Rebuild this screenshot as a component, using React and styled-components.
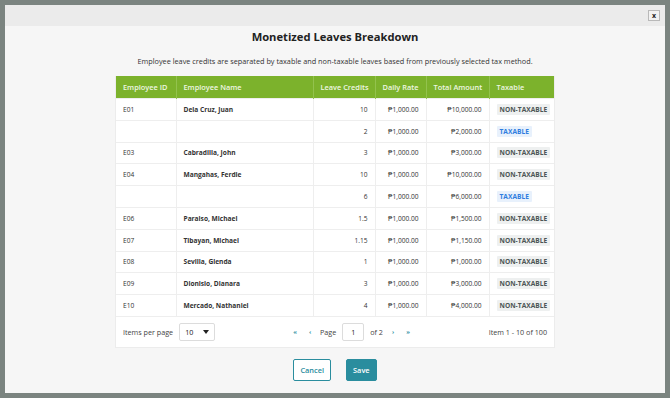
import React from 'react';
import styled, { createGlobalStyle } from 'styled-components';

const GlobalStyle = createGlobalStyle`
  html, body {
    margin: 0;
    padding: 0;
    background: #7b8480;
    font-family: 'Open Sans', 'Liberation Sans', sans-serif;
  }
`;

const teal = '#2a8d9e';

const Backdrop = styled.div`
  width: 670px;
  height: 398px;
  padding: 5px;
  box-sizing: border-box;
`;

const Modal = styled.div`
  width: 660px;
  height: 388px;
  background: #f6f6f6;
  display: flex;
  flex-direction: column;
`;

const TitleBar = styled.div`
  height: 21px;
  background: #ebebeb;
  display: flex;
  justify-content: flex-end;
  align-items: center;
  padding-right: 5px;
`;

const CloseButton = styled.button`
  width: 12px;
  height: 11px;
  padding: 0;
  border: 1px solid #b9b9b9;
  background: #f2f2f2;
  font-size: 7px;
  font-weight: 700;
  line-height: 8px;
  color: #222;
  font-family: inherit;
`;

const Content = styled.div`
  display: flex;
  flex-direction: column;
  align-items: center;
  padding-top: 2px;
`;

const Title = styled.h2`
  margin: 0;
  font-size: 11.2px;
  font-weight: 700;
  color: #222;
  line-height: 18px;
`;

const Subtitle = styled.p`
  margin: 9px 0 9px;
  font-size: 7.3px;
  color: #333;
  line-height: 12px;
`;

const TableCard = styled.div`
  width: 438px;
  background: #fff;
  border: 1px solid #ececec;
  border-top: none;
`;

const Table = styled.table`
  width: 100%;
  border-collapse: collapse;
  table-layout: fixed;
`;

const Th = styled.th`
  background: #7cb22c;
  color: #eef7e2;
  font-size: 7.4px;
  font-weight: 600;
  height: 22px;
  padding: 0 7px;
  white-space: nowrap;
  text-align: ${({ $align }) => $align || 'left'};
  border-left: 1px solid #93c24e;
  &:first-child {
    border-left: none;
  }
`;

const Td = styled.td`
  height: 20.8px;
  padding: 0 7px;
  font-size: 6.6px;
  color: #333;
  white-space: nowrap;
  font-weight: ${({ $bold }) => ($bold ? 700 : 400)};
  text-align: ${({ $align }) => $align || 'left'};
  border-left: 1px solid #eeeeee;
  border-top: 1px solid #eeeeee;
  &:first-child {
    border-left: none;
  }
`;

const Badge = styled.span`
  display: inline-block;
  padding: 1px 3px;
  font-size: 6.6px;
  font-weight: 700;
  letter-spacing: 0.05px;
  border-radius: 1px;
  color: ${({ $taxable }) => ($taxable ? '#2f7de0' : '#4c5555')};
  background: ${({ $taxable }) => ($taxable ? '#e8f1fc' : '#eef0f0')};
`;

const Pager = styled.div`
  height: 30px;
  border-top: 1px solid #eeeeee;
  display: grid;
  grid-template-columns: 167px auto 1fr;
  align-items: center;
  padding: 0 7px;
  font-size: 7.2px;
  color: #444;
`;

const PerPage = styled.div`
  display: flex;
  align-items: center;
  gap: 6px;
`;

const Select = styled.div`
  width: 36px;
  height: 18px;
  box-sizing: border-box;
  border: 1px solid #dcdcdc;
  border-radius: 2px;
  display: flex;
  align-items: center;
  justify-content: space-between;
  padding: 0 5px;
  color: #222;
`;

const Nav = styled.div`
  display: flex;
  align-items: center;
  gap: 5px;
`;

const NavIcon = styled.span`
  color: ${teal};
  font-size: 6px;
  font-weight: 700;
  width: 10px;
  text-align: center;
`;

const PageInput = styled.div`
  width: 22px;
  height: 18px;
  box-sizing: border-box;
  border: 1px solid #dcdcdc;
  border-radius: 2px;
  display: flex;
  align-items: center;
  justify-content: center;
  color: #222;
  margin: 0 1px;
`;

const ItemCount = styled.div`
  justify-self: end;
`;

const Actions = styled.div`
  display: flex;
  gap: 15px;
  margin-top: 11px;
`;

const Button = styled.button`
  height: 22px;
  padding: 0 6px;
  font-family: inherit;
  font-size: 7.4px;
  font-weight: 600;
  border-radius: 2px;
  border: 1px solid ${teal};
  color: ${({ $primary }) => ($primary ? '#fff' : teal)};
  background: ${({ $primary }) => ($primary ? teal : '#fff')};
`;

const rows = [
  { id: 'E01', name: 'Dela Cruz, Juan', credits: '10', total: '₱10,000.00', taxable: false },
  { id: '', name: '', credits: '2', total: '₱2,000.00', taxable: true },
  { id: 'E03', name: 'Cabradilla, John', credits: '3', total: '₱3,000.00', taxable: false },
  { id: 'E04', name: 'Mangahas, Ferdie', credits: '10', total: '₱10,000.00', taxable: false },
  { id: '', name: '', credits: '6', total: '₱6,000.00', taxable: true },
  { id: 'E06', name: 'Paraiso, Michael', credits: '1.5', total: '₱1,500.00', taxable: false },
  { id: 'E07', name: 'Tibayan, Michael', credits: '1.15', total: '₱1,150.00', taxable: false },
  { id: 'E08', name: 'Sevilla, Glenda', credits: '1', total: '₱1,000.00', taxable: false },
  { id: 'E09', name: 'Dionisio, Dianara', credits: '3', total: '₱3,000.00', taxable: false },
  { id: 'E10', name: 'Mercado, Nathaniel', credits: '4', total: '₱4,000.00', taxable: false },
];

export default function App() {
  return (
    <>
      <GlobalStyle />
      <Backdrop>
        <Modal>
          <TitleBar>
            <CloseButton>x</CloseButton>
          </TitleBar>
          <Content>
            <Title>Monetized Leaves Breakdown</Title>
            <Subtitle>
              Employee leave credits are separated by taxable and non-taxable leaves based from previously selected tax method.
            </Subtitle>
            <TableCard>
              <Table>
                <colgroup>
                  <col style={{ width: 60 }} />
                  <col style={{ width: 137 }} />
                  <col style={{ width: 62 }} />
                  <col style={{ width: 51 }} />
                  <col style={{ width: 63 }} />
                  <col style={{ width: 65 }} />
                </colgroup>
                <thead>
                  <tr>
                    <Th>Employee ID</Th>
                    <Th>Employee Name</Th>
                    <Th $align="right">Leave Credits</Th>
                    <Th $align="center">Daily Rate</Th>
                    <Th $align="center">Total Amount</Th>
                    <Th>Taxable</Th>
                  </tr>
                </thead>
                <tbody>
                  {rows.map((r, i) => (
                    <tr key={i}>
                      <Td>{r.id}</Td>
                      <Td $bold>{r.name}</Td>
                      <Td $align="right">{r.credits}</Td>
                      <Td $align="right">₱1,000.00</Td>
                      <Td $align="right">{r.total}</Td>
                      <Td>
                        <Badge $taxable={r.taxable}>
                          {r.taxable ? 'TAXABLE' : 'NON-TAXABLE'}
                        </Badge>
                      </Td>
                    </tr>
                  ))}
                </tbody>
              </Table>
              <Pager>
                <PerPage>
                  Items per page
                  <Select>
                    10
                    <svg width="6" height="4" viewBox="0 0 6 4">
                      <path d="M0 0h6L3 4z" fill="#222" />
                    </svg>
                  </Select>
                </PerPage>
                <Nav>
                  <NavIcon>«</NavIcon>
                  <NavIcon>‹</NavIcon>
                  <span>Page</span>
                  <PageInput>1</PageInput>
                  <span>of 2</span>
                  <NavIcon>›</NavIcon>
                  <NavIcon>»</NavIcon>
                </Nav>
                <ItemCount>Item 1 - 10 of 100</ItemCount>
              </Pager>
            </TableCard>
            <Actions>
              <Button>Cancel</Button>
              <Button $primary>Save</Button>
            </Actions>
          </Content>
        </Modal>
      </Backdrop>
    </>
  );
}
